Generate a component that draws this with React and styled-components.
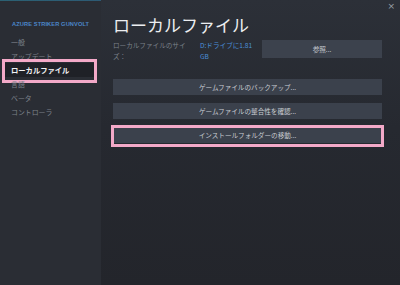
import styled, { createGlobalStyle } from "styled-components"

const GlobalStyle = createGlobalStyle`
    html, body {
        margin: 0;
        padding: 0;
        background: #24272e;
    }
    * {
        box-sizing: border-box;
    }
`

const sideItems = ["一般", "アップデート", "ローカルファイル", "言語", "ベータ", "コントローラ"]
const actions = ["ゲームファイルのバックアップ...", "ゲームファイルの整合性を確認...", "インストールフォルダーの移動..."]

export default function App() {
    return (
        <>
            <GlobalStyle />
            <Window>
                <TopLine />
                <Sidebar>
                    <GameTitle>AZURE STRIKER GUNVOLT</GameTitle>
                    {sideItems.map((item, i) => (
                        <SideItem key={item} $active={i === 2}>
                            {item}
                            {i === 2 ? <SideMark /> : null}
                        </SideItem>
                    ))}
                </Sidebar>
                <Main>
                    <Close>×</Close>
                    <Title>ローカルファイル</Title>
                    <SizeRow>
                        <SizeLabel>ローカルファイルのサイズ：</SizeLabel>
                        <SizeValue>D:ドライブに1.81 GB</SizeValue>
                        <Browse>参照...</Browse>
                    </SizeRow>
                    <Actions>
                        {actions.map((a, i) => (
                            <Action key={a}>
                                {a}
                                {i === 2 ? <ActionMark /> : null}
                            </Action>
                        ))}
                    </Actions>
                </Main>
            </Window>
        </>
    )
}

const Window = styled.div`
    position: relative;
    display: flex;
    width: 400px;
    height: 285px;
    overflow: hidden;
    font-family: "Noto Sans CJK JP", "Noto Sans", sans-serif;
`

const TopLine = styled.div`
    position: absolute;
    top: 0;
    left: 0;
    right: 0;
    height: 1px;
    background: linear-gradient(90deg, #2b6173 0%, #2d5a74 25%, #2e4f7c 60%, #2d4a7a 100%);
`

const Sidebar = styled.div`
    width: 101px;
    flex-shrink: 0;
    background: #2a2d34;
    padding-top: 20px;
    display: flex;
    flex-direction: column;
`

const GameTitle = styled.div`
    padding-left: 12px;
    font-family: "Liberation Sans", "Noto Sans", sans-serif;
    font-size: 5.7px;
    font-weight: 700;
    letter-spacing: 0.1px;
    color: #4b86c9;
    line-height: 8px;
    margin-bottom: 7px;
    white-space: nowrap;
`

const SideItem = styled.div`
    position: relative;
    height: 14px;
    line-height: 14px;
    font-size: ${p => (p.$active ? "7.3px" : "6.9px")};
    font-weight: ${p => (p.$active ? 700 : 400)};
    color: ${p => (p.$active ? "#f2f3f5" : "#7d828b")};
    background: ${p => (p.$active ? "#1f2127" : "transparent")};
    margin: ${p => (p.$active ? "0 4px 0 2px" : "0")};
    padding-left: ${p => (p.$active ? "9px" : "11px")};
`

const SideMark = styled.div`
    position: absolute;
    left: 0;
    right: 0;
    top: -4px;
    bottom: -6px;
    border: 3px solid #f3a9c8;
`

const Main = styled.div`
    position: relative;
    flex: 1;
    padding: 13px 18px 0 12px;
    background: linear-gradient(180deg, #2c3038 0%, #262930 45%, #23252b 100%);
`

const Close = styled.div`
    position: absolute;
    top: 1px;
    right: 5px;
    font-family: "DejaVu Sans", sans-serif;
    font-size: 9px;
    color: #9aa0a8;
`

const Title = styled.h1`
    margin: 0;
    font-size: 17px;
    font-weight: 400;
    line-height: 24px;
    color: #eceef1;
`

const SizeRow = styled.div`
    display: flex;
    align-items: flex-start;
    margin-top: 3px;
`

const SizeLabel = styled.div`
    width: 87px;
    padding-right: 12px;
    font-size: 6.6px;
    line-height: 11px;
    color: #7b818a;
`

const SizeValue = styled.div`
    width: 58px;
    font-size: 6.6px;
    line-height: 11px;
    color: #4a8fd8;
`

const Browse = styled.div`
    margin-left: auto;
    width: 120px;
    height: 18px;
    line-height: 18px;
    text-align: center;
    background: #3c424d;
    color: #c4c8cf;
    font-size: 6.6px;
`

const Actions = styled.div`
    display: flex;
    flex-direction: column;
    gap: 8px;
    margin-top: 17px;
`

const Action = styled.div`
    position: relative;
    height: 16px;
    line-height: 16px;
    text-align: center;
    background: #3b414c;
    color: #c9cdd3;
    font-size: 6.6px;
`

const ActionMark = styled.div`
    position: absolute;
    left: -2px;
    right: -2px;
    top: -2px;
    bottom: -4px;
    border: 3px solid #f3a9c8;
`
